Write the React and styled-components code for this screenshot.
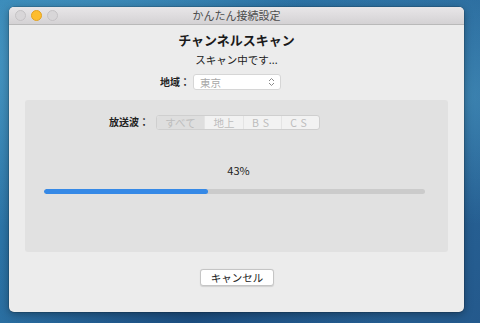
import React from "react";
import styled, { createGlobalStyle } from "styled-components";

const Global = createGlobalStyle`
  html, body { margin: 0; padding: 0; }
  body {
    width: 480px; height: 323px; overflow: hidden;
    font-family: "Noto Sans CJK JP", "Noto Sans", sans-serif;
    background:
      radial-gradient(ellipse at 10% 20%, rgba(90,170,210,0.55), transparent 45%),
      radial-gradient(ellipse at 95% 30%, rgba(80,160,200,0.5), transparent 40%),
      radial-gradient(ellipse at 40% 100%, rgba(20,60,110,0.6), transparent 50%),
      linear-gradient(135deg, #2f7fb0 0%, #2a6da0 50%, #24598c 100%);
  }
`;

const Desktop = styled.div`
  width: 480px; height: 323px;
  box-sizing: border-box;
  padding: 7px 16px 0 9px;
`;

const Window = styled.div`
  width: 455px; height: 305px;
  background: #ececec;
  border-radius: 5px;
  box-shadow: 0 2px 8px rgba(0,0,0,0.35), 0 0 0 0.5px rgba(0,0,0,0.25);
  display: flex; flex-direction: column;
  overflow: hidden;
`;

const TitleBar = styled.div`
  height: 17px;
  flex: none;
  background: linear-gradient(#e8e6e8, #d4d2d4);
  border-bottom: 1px solid #b9b9b9;
  position: relative;
  display: flex; align-items: center; justify-content: center;
`;

const Lights = styled.div`
  position: absolute; left: 6px; top: 3px;
  display: flex; gap: 5px;
`;

const Light = styled.span`
  width: 11px; height: 11px; border-radius: 50%;
  box-sizing: border-box;
  background: ${p => p.$c};
  border: 1px solid ${p => p.$b};
`;

const Title = styled.div`
  font-size: 11px; color: #4c4c4c; line-height: 17px;
`;

const Body = styled.div`
  flex: 1;
  display: flex; flex-direction: column; align-items: center;
  padding-top: 6px;
`;

const Heading = styled.div`
  font-size: 13px; font-weight: 700; color: #1a1a1a; line-height: 18px;
`;

const Sub = styled.div`
  margin-top: 3px;
  font-size: 10.5px; color: #222; line-height: 15px;
`;

const FieldRow = styled.div`
  margin-top: 7px;
  display: flex; align-items: center;
  margin-left: -32px;
`;

const Label = styled.span`
  font-size: 10px; font-weight: 700; color: #222;
  margin-right: ${p => p.$mr ?? 3}px;
  line-height: 16px;
`;

const Select = styled.div`
  width: 88px; height: 16px; box-sizing: border-box;
  background: #fff;
  border: 1px solid #d6d6d6;
  border-radius: 3px;
  display: flex; align-items: center; justify-content: space-between;
  padding: 0 5px 0 6px;
  font-size: 10.5px; color: #a8a8a8;
`;

const Panel = styled.div`
  align-self: stretch;
  margin: 10px 16px 0;
  height: 152px;
  background: #e1e1e1;
  border-radius: 3px;
  display: flex; flex-direction: column;
  padding: 14px 0 0;
  box-sizing: border-box;
`;

const WaveRow = styled.div`
  display: flex; align-items: center;
  padding-left: 84px;
`;

const Segmented = styled.div`
  display: flex;
  height: 15px; box-sizing: border-box;
  border: 1px solid #cfcfcf;
  border-radius: 3px;
  background: #f2f2f2;
  overflow: hidden;
`;

const Seg = styled.div`
  width: ${p => p.$w}px;
  box-sizing: border-box;
  display: flex; align-items: center; justify-content: center;
  font-size: 10.5px; color: #bdbdbd; letter-spacing: ${p => p.$ls || 0}px;
  background: ${p => (p.$sel ? "#dedede" : "transparent")};
  border-right: ${p => (p.$last ? "none" : "1px solid #e4e4e4")};
  line-height: 13px;
`;

const Percent = styled.div`
  margin-top: 33px;
  text-align: center;
  font-size: 11px; color: #222; line-height: 14px;
  padding-left: 4px;
`;

const Track = styled.div`
  margin: 12px 0 0 19px;
  width: 381px; height: 5px;
  border-radius: 3px;
  background: #cbcbcb;
  overflow: hidden;
`;

const Fill = styled.div`
  height: 100%;
  background: #3689e6;
  border-radius: 3px;
`;

const Button = styled.button`
  margin-top: 17px;
  width: 74px; height: 17px;
  margin-left: 1px;
  box-sizing: border-box;
  background: #fff;
  border: 1px solid #c5c5c5;
  border-radius: 3px;
  box-shadow: 0 0.5px 1px rgba(0,0,0,0.12);
  font-family: inherit;
  font-size: 10.5px; color: #222;
  padding: 0; line-height: 15px;
`;

const Stepper = () => (
  <svg width="7" height="10" viewBox="0 0 7 10">
    <path d="M1 4 L3.5 1.5 L6 4" fill="none" stroke="#8a8a8a" strokeWidth="1" />
    <path d="M1 6 L3.5 8.5 L6 6" fill="none" stroke="#8a8a8a" strokeWidth="1" />
  </svg>
);

export default function App() {
  const progress = 43;
  return (
    <>
      <Global />
      <Desktop>
        <Window>
          <TitleBar>
            <Lights>
              <Light $c="#d8d6d8" $b="#c4c2c4" />
              <Light $c="#fdbd2e" $b="#e0a224" />
              <Light $c="#d8d6d8" $b="#c4c2c4" />
            </Lights>
            <Title>かんたん接続設定</Title>
          </TitleBar>
          <Body>
            <Heading>チャンネルスキャン</Heading>
            <Sub>スキャン中です...</Sub>
            <FieldRow>
              <Label>地域：</Label>
              <Select>
                <span>東京</span>
                <Stepper />
              </Select>
            </FieldRow>
            <Panel>
              <WaveRow>
                <Label $mr={7}>放送波：</Label>
                <Segmented>
                  <Seg $w={48} $sel>すべて</Seg>
                  <Seg $w={39}>地上</Seg>
                  <Seg $w={38} $ls={4}>BS</Seg>
                  <Seg $w={37} $ls={4} $last>CS</Seg>
                </Segmented>
              </WaveRow>
              <Percent>{progress}%</Percent>
              <Track>
                <Fill style={{ width: `${progress}%` }} />
              </Track>
            </Panel>
            <Button>キャンセル</Button>
          </Body>
        </Window>
      </Desktop>
    </>
  );
}
